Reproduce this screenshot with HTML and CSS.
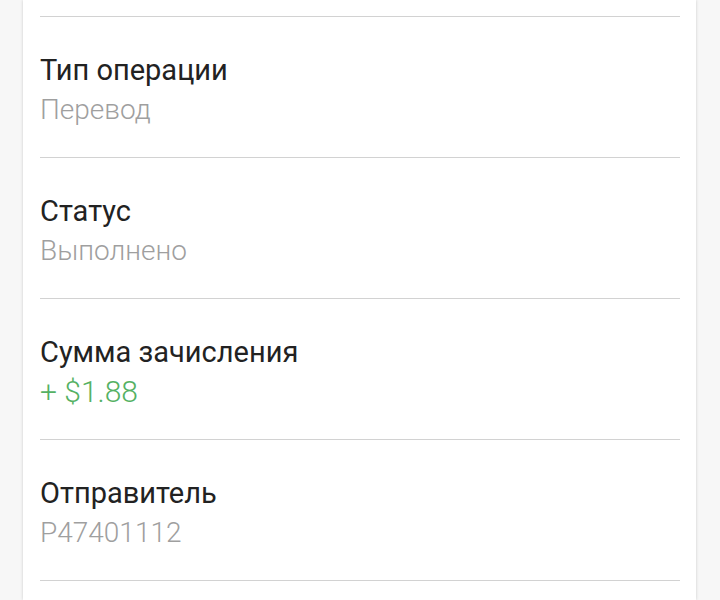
FILE: index.html
```html
<!DOCTYPE html>
<html lang="ru">
<head>
<meta charset="utf-8">
<link rel="stylesheet" href="styles.css">
</head>
<body>
<div class="card">
  <div class="top"></div>
  <div class="row">
    <div class="label">Тип операции</div>
    <div class="value">Перевод</div>
  </div>
  <div class="row">
    <div class="label">Статус</div>
    <div class="value">Выполнено</div>
  </div>
  <div class="row">
    <div class="label">Сумма зачисления</div>
    <div class="value green">+ $1.88</div>
  </div>
  <div class="row">
    <div class="label">Отправитель</div>
    <div class="value">P47401112</div>
  </div>
  <div class="divider"></div>
</div>
</body>
</html>
```
FILE: styles.css
```css
html, body {
  margin: 0;
  padding: 0;
}
body {
  background: #f7f7f7;
  height: 600px;
  overflow: hidden;
  font-family: Roboto, "Noto Sans", sans-serif;
}
.card {
  margin: 0 24px 0 23px;
  background: #ffffff;
  box-shadow: 0 0 3px rgba(0, 0, 0, 0.18);
  padding: 0 16px 0 17px;
  height: 600px;
  box-sizing: border-box;
}
.top {
  height: 16px;
}
.row {
  border-top: 1px solid #d2d2d2;
  padding: 34px 0 28px;
}
.divider {
  border-top: 1px solid #d2d2d2;
}
.label {
  font-size: 29px;
  line-height: 38px;
  font-weight: 400;
  color: #222222;
}
.value {
  margin-top: 2px;
  font-size: 28px;
  line-height: 38px;
  font-weight: 300;
  color: #9f9f9f;
}
.value.green {
  font-size: 30px;
  color: #55b163;
}
```
